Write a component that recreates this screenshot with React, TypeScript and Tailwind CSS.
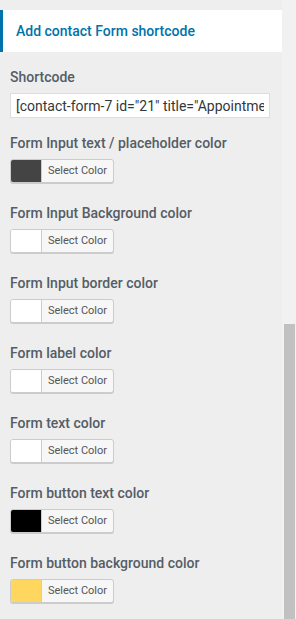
const colorFields = [
  { label: "Form Input text / placeholder color", color: "#444444" },
  { label: "Form Input Background color", color: "#ffffff" },
  { label: "Form Input border color", color: "#ffffff" },
  { label: "Form label color", color: "#ffffff" },
  { label: "Form text color", color: "#ffffff" },
  { label: "Form button text color", color: "#000000" },
  { label: "Form button background color", color: "#ffd75e" },
];

const ColorButton = ({ color }: { color: string }) => (
  <button
    type="button"
    className="flex h-[24px] w-[104px] overflow-hidden rounded-[3px] border border-[#cccccc] bg-[#f7f7f7] shadow-[0_1px_0_#cccccc]"
  >
    <span className="h-full w-[31px] border-r border-[#cccccc]" style={{ backgroundColor: color }} />
    <span className="flex flex-1 items-center justify-center text-[11px] text-[#555555]">Select Color</span>
  </button>
);

export default function App() {
  return (
    <div className="flex h-[619px] w-[296px] overflow-hidden bg-[#eeeeee] font-['Roboto',sans-serif]">
      <div className="w-[282px] pt-[10px]">
        <div className="flex h-[42px] items-center border-l-[3px] border-[#0073aa] bg-white pl-[13px]">
          <h3 className="text-[14px] font-medium text-[#0073aa]">Add contact Form shortcode</h3>
        </div>

        <div className="px-[10px] pt-[15px]">
          <label className="block text-[14px] leading-[20px] font-medium text-[#555d66]">Shortcode</label>
          <input
            readOnly
            value={'[contact-form-7 id="21" title="Appointment Form"]'}
            className="mt-[6px] block h-[25px] w-[260px] border border-[#dddddd] bg-white px-[5px] text-[14px] text-[#32373c] outline-none"
          />

          <div className="mt-[15px] flex flex-col gap-[20px]">
            {colorFields.map((field) => (
              <div key={field.label} className="flex flex-col gap-[6px]">
                <label className="text-[14px] leading-[20px] font-medium text-[#555d66]">{field.label}</label>
                <ColorButton color={field.color} />
              </div>
            ))}
          </div>
        </div>
      </div>

      <div className="flex w-[14px] flex-col bg-[#f1f1f1]">
        <div className="h-[324px]" />
        <div className="ml-[2px] w-[11px] flex-1 bg-[#c1c1c1]" />
      </div>
    </div>
  );
}
